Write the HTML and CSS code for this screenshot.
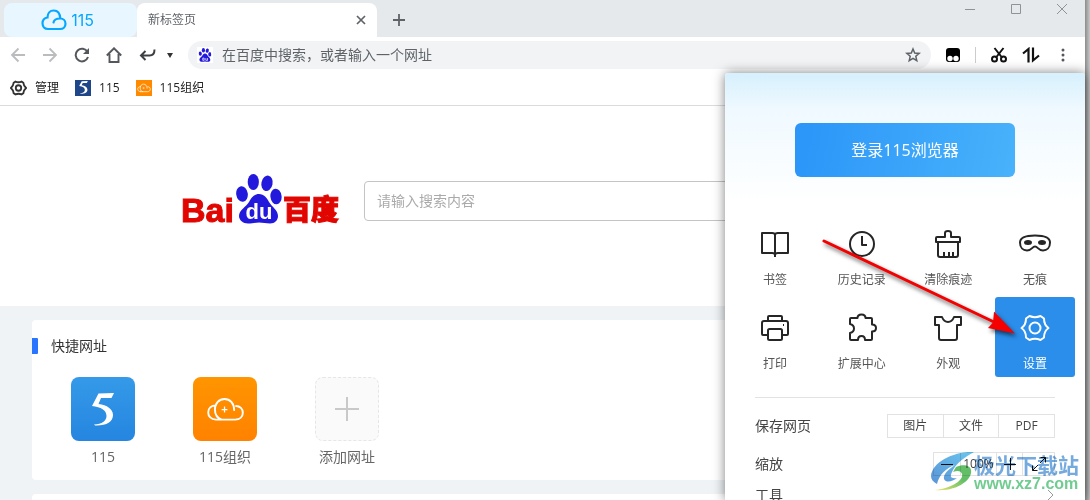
FILE: index.html
```html
<!DOCTYPE html>
<html lang="zh-CN">
<head>
<meta charset="utf-8">
<title>新标签页</title>
<link rel="stylesheet" href="styles.css">
</head>
<body>
<svg class="defs" aria-hidden="true">
  <defs>
    <symbol id="paw" viewBox="0 0 46 50">
      <ellipse cx="6" cy="20" rx="5.8" ry="7.8" transform="rotate(-8 6 20)"/>
      <ellipse cx="17.3" cy="8" rx="5.6" ry="8"/>
      <ellipse cx="31" cy="9.3" rx="5.6" ry="7.8" transform="rotate(12 31 9.3)"/>
      <ellipse cx="40" cy="22.5" rx="5.6" ry="7.8" transform="rotate(-6 40 22.5)"/>
      <path d="M23 20c-5 0-8 4-10 8-3 5-10 8-10 14 0 4 4 7.500 9 7.500 4 0 7-1 11-1s7 1 11 1c5 0 8-3.500 8-7.500 0-6-6-9-9-14-2-4-5-8-10-8z"/>
    </symbol>
    <symbol id="orgcloud" viewBox="0 0 40 26">
      <path d="M10 23.500H30c5 0 8-3 8-7.200 0-4-3-7-7-7M29 13.500C29 6.500 24.500 2 19 2S9 6.500 9 13c0 5 2.500 9 7 10.500M10 8.800C5 8.800 2 12 2 16s3 7.500 8 7.500" fill="none" stroke="#fff" stroke-width="2" stroke-linecap="round"/>
      <path d="M19 10v6M16 13h6" stroke="#fff" stroke-width="1.300"/>
    </symbol>
    <symbol id="five" viewBox="0 0 22 33">
      <path d="M22 0 19.500 5H9L6.500 11C15 12 21 16 21 22c0 7-7 11-18 10.500l-1-1C10 31 14.500 28 14.500 23 14.500 17 9 14 0 13L6.500.500z" fill="#fff"/>
    </symbol>
  </defs>
</svg>

<div class="browser">
  <header class="tabstrip">
    <button class="tab tab-home" type="button">
      <svg width="26" height="22" viewBox="0 0 26 22" fill="none" stroke="#06a7ff" stroke-width="2.200" stroke-linecap="round"><path d="M7 20h12c3.500 0 5.500-2.400 5.500-5.300 0-3-2.200-5.200-5.200-5.200C19 4.500 16.500 1.500 12.800 1.500 9 1.500 6.500 4.500 6.500 8.500 3.500 9 1.500 11 1.500 14.300S3.700 20 7 20zM12.500 13.500c.5-2.500 3-4 6.500-4"/></svg>
      <span>115</span>
    </button>
    <div class="tab tab-active">
      <span>新标签页</span>
      <button class="icon-btn" type="button" aria-label="关闭标签页"><svg width="10" height="10" viewBox="0 0 10 10" stroke="#5f6368" stroke-width="1.700"><path d="M1 1l8 8M9 1L1 9"/></svg></button>
    </div>
    <button class="icon-btn new-tab" type="button" aria-label="新建标签页"><svg width="12" height="12" viewBox="0 0 12 12" stroke="#5f6368" stroke-width="1.800"><path d="M6 0v12M0 6h12"/></svg></button>
    <div class="window-buttons">
      <button class="icon-btn" type="button" aria-label="最小化"><svg width="10" height="10" viewBox="0 0 10 10" stroke="#909396"><path d="M0 5.500h10"/></svg></button>
      <button class="icon-btn" type="button" aria-label="最大化"><svg width="10" height="10" viewBox="0 0 10 10" stroke="#909396" fill="none"><path d="M.5.500h9v9h-9z"/></svg></button>
      <button class="icon-btn" type="button" aria-label="关闭"><svg width="10" height="10" viewBox="0 0 10 10" stroke="#909396"><path d="M0 0l10 10M10 0L0 10"/></svg></button>
    </div>
  </header>

  <div class="toolbar">
    <nav class="nav-buttons">
      <button class="icon-btn" type="button" aria-label="后退"><svg width="16" height="16" viewBox="0 0 16 16" fill="none" stroke="#babcbe" stroke-width="1.800"><path d="M15 8H2M8.500 1.500L2 8l6.500 6.500"/></svg></button>
      <button class="icon-btn" type="button" aria-label="前进"><svg width="16" height="16" viewBox="0 0 16 16" fill="none" stroke="#babcbe" stroke-width="1.800"><path d="M1 8h13M7.500 1.500L14 8l-6.500 6.500"/></svg></button>
      <button class="icon-btn" type="button" aria-label="刷新"><svg width="16" height="16" viewBox="0 0 16 16" fill="none" stroke="#54575b" stroke-width="2"><path d="M13.500 5A6.300 6.300 0 1 0 14 10"/><path d="M15 1v6H9z" fill="#54575b" stroke="none"/></svg></button>
      <button class="icon-btn" type="button" aria-label="主页"><svg width="16" height="16" viewBox="0 0 16 16" fill="none" stroke="#54575b" stroke-width="1.900"><path d="M.8 8.500L8 1.300l7.200 7.200M3.500 7v8h9V7"/></svg></button>
      <button class="icon-btn" type="button" aria-label="恢复"><svg width="18" height="16" viewBox="0 0 18 16" fill="none" stroke="#3d4043" stroke-width="2"><path d="M7.500 4L3 8.500 7.500 13M3 8.500h8.500q5 0 5-6"/></svg></button>
    </nav>
    <button class="icon-btn caret" type="button" aria-label="更多恢复选项"><svg width="6" height="5" viewBox="0 0 6 5"><path d="M0 0h6L3 5z" fill="#333"/></svg></button>
    <div class="address">
      <svg class="address-logo" width="14" height="14" viewBox="0 0 46 50" fill="#2319dc"><use href="#paw"/><path d="M15 36h5v8h-5zM26 36v8h6v-8" stroke="#fff" fill="none" stroke-width="2.500"/></svg>
      <input type="text" aria-label="地址栏" placeholder="在百度中搜索，或者输入一个网址">
      <button class="icon-btn" type="button" aria-label="收藏"><svg width="16" height="16" viewBox="0 0 16 16" fill="none" stroke="#5f6368" stroke-width="1.500"><path d="M8 2l1.700 4 4.500.4-3.400 2.900 1 4.400L8 11.400l-3.800 2.300 1-4.400-3.400-2.900L6.300 6z"/></svg></button>
    </div>
    <div class="tools">
      <button class="icon-btn" type="button" aria-label="扩展"><svg width="14" height="14" viewBox="0 0 14 14"><rect width="14" height="14" rx="3"/><circle cx="4" cy="10.500" r="2.700" fill="#fff"/><circle cx="10" cy="10.500" r="2.700" fill="#fff"/></svg></button>
      <span class="separator"></span>
      <button class="icon-btn" type="button" aria-label="截图"><svg width="16" height="16" viewBox="0 0 16 16" fill="none" stroke="#111" stroke-width="2"><circle cx="3.500" cy="12" r="2.500"/><circle cx="12.500" cy="12" r="2.500"/><path d="M3.500 1l7.500 9.500M12.500 1L5 10.500"/></svg></button>
      <button class="icon-btn" type="button" aria-label="传输"><svg width="18" height="16" viewBox="0 0 18 16" fill="none" stroke="#111" stroke-width="2.200"><path d="M1 6.500L6.500 2v13.500M11 .5V13.500L17 8.500"/></svg></button>
      <button class="icon-btn" type="button" aria-label="菜单"><svg width="4" height="14" viewBox="0 0 4 14" fill="#54575b"><circle cx="2" cy="2" r="1.500"/><circle cx="2" cy="7" r="1.500"/><circle cx="2" cy="12" r="1.500"/></svg></button>
    </div>
  </div>

  <nav class="bookmarks">
    <a href="#manage"><svg width="17" height="16" viewBox="0 0 28 26" fill="none" stroke="#333" stroke-width="3"><path d="M9 2.500Q14 4.500 19 2.500L22 4.500Q22.500 9.500 26.500 13 22.500 16.500 22 21.500L19 23.500Q14 21.500 9 23.500L6 21.500Q5.500 16.500 1.500 13 5.500 9.500 6 4.500z"/><circle cx="14" cy="13" r="4.500"/></svg><span>管理</span></a>
    <a href="#115"><span class="favicon favicon-blue"><svg width="9" height="13"><use href="#five"/></svg></span><span>115</span></a>
    <a href="#org"><span class="favicon favicon-orange"><svg width="14" height="10"><use href="#orgcloud"/></svg></span><span>115组织</span></a>
  </nav>

  <main class="page">
    <form class="hero">
      <svg class="baidu" width="156" height="52" viewBox="0 0 156 52" role="img" aria-label="Baidu 百度">
        <text class="baidu-word" x="-1" y="48">Bai</text>
        <svg x="54" y="0" width="46" height="50" fill="#2319dc"><use href="#paw"/></svg>
        <text class="baidu-du" x="77" y="45" text-anchor="middle">du</text>
        <text class="baidu-cn" x="101" y="46">百度</text>
      </svg>
      <input class="search" type="text" aria-label="搜索" placeholder="请输入搜索内容">
    </form>
    <div class="cards">
      <section class="card">
        <h2>快捷网址</h2>
        <div class="tiles">
          <a class="tile" href="#115"><span class="tile-icon tile-blue"><svg width="22" height="33"><use href="#five"/></svg></span><span>115</span></a>
          <a class="tile" href="#org"><span class="tile-icon tile-orange"><svg width="39" height="25"><use href="#orgcloud"/></svg></span><span>115组织</span></a>
          <button class="tile" type="button"><span class="tile-icon tile-add"><svg width="24" height="24" viewBox="0 0 24 24" stroke="#c9c9c9" stroke-width="2"><path d="M12 0v24M0 12h24"/></svg></span><span>添加网址</span></button>
        </div>
      </section>
      <section class="card card-next"></section>
    </div>
  </main>

  <aside class="menu">
    <button class="login" type="button">登录115浏览器</button>
    <div class="actions">
      <button type="button"><svg viewBox="0 0 32 32"><path d="M3 5h10q3 0 3 2 0-2 3-2h10v20H19q-3 0-3 2 0-2-3-2H3zM16 7v22"/></svg><span>书签</span></button>
      <button type="button"><svg viewBox="0 0 32 32"><circle cx="16" cy="16" r="12"/><path d="M16 8v9h5"/></svg><span>历史记录</span></button>
      <button type="button"><svg viewBox="0 0 32 32"><path d="M4 14V10q0-1 1-1h8V5q0-2 3-2t3 2v4h8q1 0 1 1v4zM6 14v13q0 2 2 2h16q2 0 2-2V14M12 29v-5M17 29v-5M21 29v-5"/></svg><span>清除痕迹</span></button>
      <button type="button"><svg viewBox="0 0 32 32"><path d="M16 7.500c-9 0-15 1.500-15 7 0 5 3 8 7 8 5 0 5-4 8-4s3 4 8 4c4 0 7-3 7-8 0-5.500-6-7-15-7z"/><ellipse class="solid" cx="9" cy="14.500" rx="4" ry="2.500"/><ellipse class="solid" cx="23" cy="14.500" rx="4" ry="2.500"/></svg><span>无痕</span></button>
      <button type="button"><svg viewBox="0 0 32 32"><path d="M9 9V5q0-1 1-1h12q1 0 1 1v4M8 23H4q-1 0-1-1V11q0-2 2-2h22q2 0 2 2v11q0 1-1 1h-4M24 13h1"/><rect x="9" y="17" width="14" height="11" rx="1.500"/></svg><span>打印</span></button>
      <button type="button"><svg viewBox="0 0 32 32"><path d="M4 7q0-1 1-1h6.500q0-3.500 4-3.500t4 3.500H25q1 0 1 1v5.500q4 0 4 3.500t-4 3.500V27q0 1-1 1h-6q0-4-3.500-4T12 28H5q-1 0-1-1v-6q4-1 4-4.500T4 12z"/></svg><span>扩展中心</span></button>
      <button type="button"><svg viewBox="0 0 32 32"><path d="M3 5h7q2 5 6 5t6-5h7v8h-4v13q0 2-2 2H9q-2 0-2-2V13H3z"/></svg><span>外观</span></button>
      <button class="selected" type="button"><svg viewBox="0 0 32 32"><path d="M10.500 4Q16 6.500 21.500 4L25 6.500Q25 13 29.500 16 25 19 25 25.500L21.500 28Q16 25.500 10.500 28L7 25.500Q7 19 2.500 16 7 13 7 6.500z"/><circle cx="16" cy="16" r="5.500"/></svg><span>设置</span></button>
    </div>
    <div class="options">
      <div class="option"><span>保存网页</span>
        <div class="segments save"><button type="button">图片</button><button type="button">文件</button><button type="button">PDF</button></div>
      </div>
      <div class="option"><span>缩放</span>
        <div class="segments zoom">
          <button type="button" aria-label="缩小"><svg width="12" height="12" viewBox="0 0 12 12" stroke="#111"><path d="M0 6.500h12"/></svg></button>
          <output>100%</output>
          <button type="button" aria-label="放大"><svg width="12" height="12" viewBox="0 0 12 12" stroke="#111"><path d="M0 6.500h12M6.500 0v12"/></svg></button>
          <button type="button" aria-label="全屏"><svg width="14" height="14" viewBox="0 0 14 14" fill="none" stroke="#111"><path d="M8.500.500h5v5M13.500.500L8 6M.5 8.500v5h5M.5 13.500L6 8"/></svg></button>
        </div>
      </div>
      <button class="option option-tools" type="button"><span>工具</span><svg width="8" height="12" viewBox="0 0 8 12" fill="none" stroke="#999"><path d="M1 1l5 5-5 5"/></svg></button>
    </div>
    <svg class="pointer" width="204" height="108" viewBox="0 0 204 108" aria-hidden="true"><path d="M4 9l170 81" stroke="#f40000" stroke-width="3" stroke-linecap="round"/><path d="M195 101.500L168 96l5-5.500 1-11z" fill="#f40000"/></svg>
    <div class="watermark">
      <svg width="44" height="42" viewBox="0 0 44 42" aria-hidden="true">
        <defs>
          <linearGradient id="wmBlue" x1="0" y1="1" x2="1" y2="0"><stop offset="0" stop-color="#5b93d5"/><stop offset="1" stop-color="#69c7f0"/></linearGradient>
          <linearGradient id="wmGreen" x1="0" y1="1" x2="1" y2="0"><stop offset="0" stop-color="#eee46c"/><stop offset=".6" stop-color="#62bf68"/><stop offset="1" stop-color="#62bf68"/></linearGradient>
        </defs>
        <path d="M44 1C24 0 2 11 1 25c0 3 2 6 6 8 2-9 9-16 18-19-7 5-12 9-11 14 2 4 8 3 13-1-7 1-7-2-5-6C26 12 35 6 44 1z" fill="url(#wmBlue)"/>
        <path d="M26 16c7-3 14-2 15 3 2 10-15 22-36 20 14-1 29-9 27-16-1-3-4-4-9-2z" fill="url(#wmGreen)"/>
      </svg>
      <div><strong>极光下载站</strong><span>www.xz7.com</span></div>
    </div>
  </aside>
</div>
</body>
</html>
```

FILE: styles.css
```css
* { box-sizing: border-box; }

body {
  margin: 0;
  height: 100vh;
  overflow: hidden;
  background: linear-gradient(90deg, #8c8c8c, #c8c8c8) right / 5px 100% no-repeat;
  font: 12px/16px "Open Sans", "Noto Sans CJK SC", sans-serif;
  color: #333;
}

button, input {
  font: inherit;
  color: inherit;
  border: 0;
  padding: 0;
  background: none;
}

a { color: inherit; text-decoration: none; }
svg { display: block; flex: none; }
.defs { position: absolute; width: 0; height: 0; }

.browser {
  position: relative;
  display: flex;
  flex-direction: column;
  height: 100%;
  margin-right: 5px;
  background: #fff;
}

.icon-btn {
  display: flex;
  align-items: center;
  justify-content: center;
  flex: none;
}

/* Tabs */
.tabstrip {
  display: flex;
  align-items: stretch;
  height: 37px;
  padding: 3px 0 0 4px;
  background: #e5e9ec;
}
.tab { display: flex; align-items: center; border-radius: 8px; }
.tab-home {
  justify-content: center;
  gap: 4px;
  width: 133px;
  padding-right: 6px;
  background: #e8f6ff;
  color: #06a7ff;
  font: 16px/20px Inter, sans-serif;
}
.tab-active {
  justify-content: space-between;
  width: 240px;
  padding: 0 11px;
  border-radius: 8px 8px 0 0;
  background: #fff;
  color: #5f6368;
}
.new-tab { width: 44px; }
.window-buttons {
  display: flex;
  align-items: flex-start;
  gap: 36px;
  margin-left: auto;
  padding: 1px 18px 0 0;
}

/* Toolbar */
.toolbar {
  display: flex;
  align-items: center;
  height: 36px;
  padding: 0 20px 0 10px;
}
.nav-buttons { display: flex; gap: 16px; }
.caret { width: 28px; }
.address {
  display: flex;
  align-items: center;
  flex: 1;
  height: 28px;
  margin-left: 4px;
  padding: 0 10px;
  border-radius: 14px;
  background: #f1f3f4;
}
.address-logo { background: #fff; outline: 1px solid #fff; }
.address input {
  flex: 1;
  height: 28px;
  margin-left: 10px;
  padding-bottom: 2px;
  font-size: 14px;
}
.address input::placeholder { color: #5f6368; opacity: 1; }
.tools { display: flex; align-items: center; gap: 15px; margin-left: 15px; }
.separator { width: 1px; height: 16px; background: #ccc; }
.tools .icon-btn:last-child { margin-left: 6px; }

/* Bookmarks */
.bookmarks {
  display: flex;
  gap: 16px;
  height: 33px;
  padding: 0 10px 3px;
  border-bottom: 1px solid #d9dbdd;
  color: #222;
}
.bookmarks a { display: flex; align-items: center; gap: 8px; }
.favicon {
  display: flex;
  align-items: center;
  justify-content: center;
  width: 16px;
  height: 16px;
}
.favicon-blue { background: #20468a; }
.favicon-orange { background: #ff8a00; }

/* New tab page */
.page {
  display: flex;
  flex-direction: column;
  flex: 1;
  min-height: 0;
  overflow: hidden;
  background: #eff3f6;
}
.hero {
  display: flex;
  flex: none;
  align-items: flex-start;
  gap: 26px;
  padding: 68px 180px 80px 182px;
  background: #fff;
}
.baidu { overflow: visible; }
.baidu-word { font: bold 34px "Liberation Sans", sans-serif; fill: #e10601; stroke: #e10601; stroke-width: 1px; }
.baidu-du { font: bold 22px "Liberation Sans", sans-serif; fill: #fff; }
.baidu-cn { font: 900 28px "Noto Sans CJK SC", sans-serif; fill: #e10601; stroke: #e10601; stroke-width: 1px; }
.search {
  flex: 1;
  min-width: 0;
  height: 40px;
  margin-top: 7px;
  padding: 0 12px 2px;
  border: 1px solid #c4c4c4;
  border-radius: 4px;
  font-size: 14px;
}
.search::placeholder { color: #aaa; opacity: 1; }

.cards {
  display: flex;
  flex-direction: column;
  gap: 14px;
  padding: 14px 32px 0;
}
.card {
  flex: none;
  padding: 16px 0 13px;
  border-radius: 4px;
  background: #fff;
}
.card-next { min-height: 160px; }
.card h2 {
  display: flex;
  align-items: center;
  gap: 13px;
  margin: 0;
  font-size: 14px;
  line-height: 20px;
  font-weight: 400;
}
.card h2::before {
  content: "";
  width: 6px;
  height: 16px;
  border-radius: 0 1px 1px 0;
  background: #2a75ff;
}
.tiles { display: flex; gap: 42px; padding: 21px 31px 0; }
.tile {
  display: flex;
  flex-direction: column;
  align-items: center;
  gap: 6px;
  width: 80px;
  color: #666;
  font-size: 14px;
  line-height: 20px;
}
.tile-icon {
  display: flex;
  align-items: center;
  justify-content: center;
  width: 64px;
  height: 64px;
  border-radius: 8px;
}
.tile-blue { background: linear-gradient(#359ae8, #2585e0); }
.tile-orange { background: linear-gradient(#ff9500, #ff8200); }
.tile-add { border: 1px dashed #e6e6e6; background: #fafafa; }

/* Browser menu, dropped over the page */
.menu {
  position: absolute;
  top: 73px;
  right: 0;
  bottom: 0;
  width: 360px;
  padding-top: 50px;
  border-radius: 3px 3px 0 0;
  background: linear-gradient(#d6f0fd, #eff9ff 36px, #fff 130px);
  box-shadow: 0 0 12px rgba(0, 0, 0, .5);
}
.login {
  display: block;
  width: 220px;
  height: 54px;
  margin: 0 auto 36px;
  border-radius: 6px;
  background: linear-gradient(100deg, #2b95f9, #48b2fb);
  color: #fff;
  font-size: 16px;
}
.actions {
  display: grid;
  grid-template-columns: repeat(4, 80px);
  justify-content: space-between;
  row-gap: 4px;
  padding: 0 10px;
}
.actions button {
  display: flex;
  flex-direction: column;
  align-items: center;
  gap: 12px;
  height: 80px;
  padding-top: 15px;
  border-radius: 3px;
  color: #555;
}
.actions svg {
  width: 32px;
  height: 32px;
  fill: none;
  stroke: #262626;
  stroke-width: 2;
  stroke-linejoin: round;
}
.actions .solid { fill: #262626; stroke: none; }
.actions .selected { background: #2b8eeb; color: #fff; }
.actions .selected svg { stroke: #fff; }

.options {
  display: flex;
  flex-direction: column;
  margin: 20px 30px 0;
  padding-top: 9px;
  border-top: 1px solid #e2e2e2;
}
.option {
  display: flex;
  align-items: center;
  justify-content: space-between;
  height: 38px;
  font-size: 14px;
  color: #444;
}
.option-tools { height: 24px; }
.segments {
  display: flex;
  height: 24px;
  border: 1px solid #e2e2e2;
  font-size: 12px;
}
.segments > * {
  display: flex;
  align-items: center;
  justify-content: center;
}
.segments > * + * { border-left: 1px solid #e2e2e2; }
.save { width: 168px; }
.save button { flex: 1; }
.zoom { width: 122px; }
.zoom > * { flex: none; width: 26px; }
.zoom output { width: 36px; }
.zoom button:last-child { flex: 1; }

/* Arrow drawn across the menu */
.pointer {
  position: absolute;
  left: 95px;
  top: 159px;
  filter: drop-shadow(2px 3px 2px rgba(0, 0, 0, .6));
}

.watermark {
  position: absolute;
  right: 6px;
  bottom: 7px;
  display: flex;
  align-items: center;
  mix-blend-mode: multiply;
  pointer-events: none;
}
.watermark div { display: flex; flex-direction: column; }
.watermark strong { font: 700 21px/24px "Noto Sans CJK SC", sans-serif; color: #74aadd; }
.watermark span { font: bold 16px/16px "Liberation Sans", sans-serif; color: #70cc90; }
```
